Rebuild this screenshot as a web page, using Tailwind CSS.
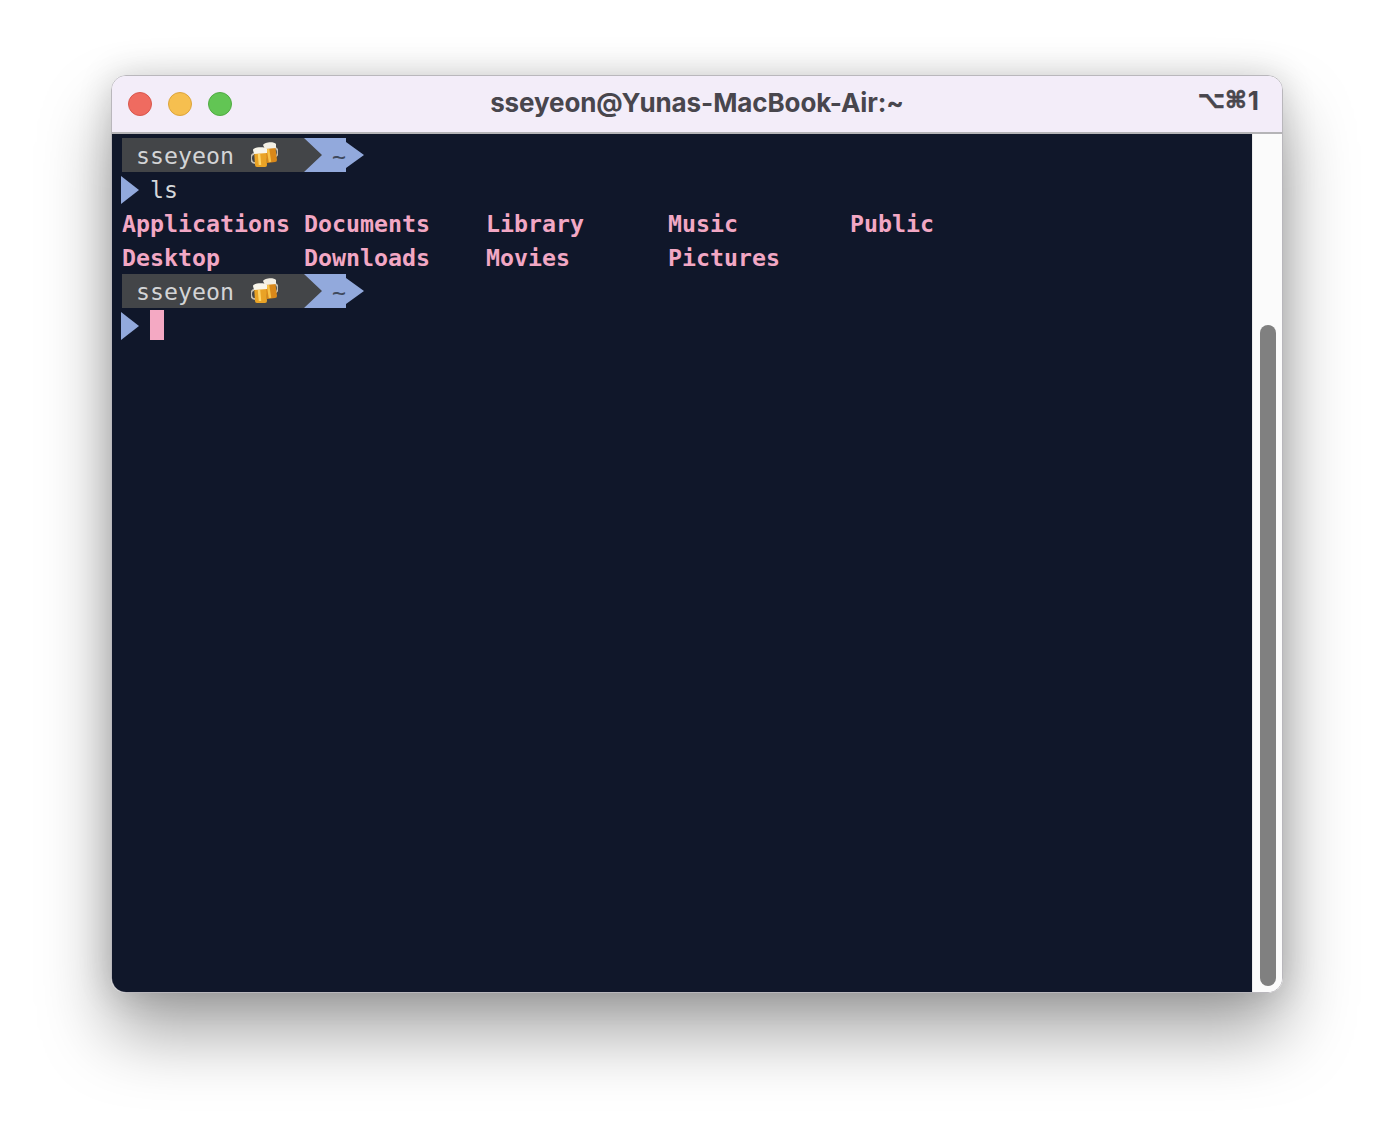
<!doctype html>
<html>
<head>
<meta charset="utf-8">
<script src="https://cdn.jsdelivr.net/npm/@tailwindcss/browser@4"></script>
</head>
<body class="bg-white w-[1394px] h-[1140px] overflow-hidden pt-[75px] pl-[111px]">
<div class="w-[1172px] h-[918px] rounded-[15px] overflow-hidden flex flex-col border border-[#b9b7bc] shadow-[0_40px_70px_rgba(0,0,0,0.36),0_0_34px_rgba(0,0,0,0.16)]">
  <div class="h-[56px] shrink-0 bg-[#f3edf9] flex items-center relative">
    <div class="flex gap-[16px] pl-[16px]">
      <span class="w-[24px] h-[24px] rounded-full bg-[#ef6b60] border border-[#d9574d]"></span>
      <span class="w-[24px] h-[24px] rounded-full bg-[#f6bf4f] border border-[#dda53c]"></span>
      <span class="w-[24px] h-[24px] rounded-full bg-[#62c554] border border-[#50ab43]"></span>
    </div>
    <div class="absolute inset-x-0 top-[9px] text-center text-[26px] leading-[36px] font-bold text-[#48464d] font-['Inter',sans-serif] tracking-[-0.1px]">sseyeon@Yunas-MacBook-Air:~</div>
    <div class="absolute right-[23px] top-[7px] flex items-baseline leading-[36px] font-bold text-[#48464d]"><span class="text-[23.5px] font-['DejaVu_Sans',sans-serif] [-webkit-text-stroke:0.7px_#48464d] -translate-y-[2px]">⌥⌘</span><span class="text-[26px] font-['Inter',sans-serif] font-bold pl-[1px]">1</span></div>
  </div>
  <div class="h-[2px] shrink-0 bg-[#b5b4b7]"></div>
  <div class="flex-1 flex min-h-0">
    <div class="flex-1 bg-[#10172a] pt-[4px] pl-[10px] font-['DejaVu_Sans_Mono','Liberation_Mono',monospace] text-[23.25px] leading-[36px]">
      <div class="h-[34px] flex relative">
        <div class="w-[200px] h-[34px] bg-[#434548] text-[#d3d4d6] pl-[14px] whitespace-pre">sseyeon</div>
        <svg class="absolute left-[129px] top-[4px]" width="27" height="25" viewBox="0 0 27 25">
          <path d="M23 6 C28 6 28 14 23 15" fill="none" stroke="#c4c0b6" stroke-width="1.8"/>
          <path d="M13 4 L24 2 L26 18 Q26 20 24 20 L16 21 Z" fill="#d9881a"/>
          <path d="M17 7 L19 20" stroke="#f8c34a" stroke-width="2.5"/>
          <path d="M12 3 C13 0 23 -1 25 2 L25 6 L14 7 Z" fill="#f3efe4"/>
          <path d="M3 12 C-1 12 -1 21 4 21" fill="none" stroke="#c4c0b6" stroke-width="1.8"/>
          <path d="M3 8 L15 7 L16 23 Q16 25 14 25 L6 25 Q4 25 4 23 Z" fill="#e9a326"/>
          <path d="M8 12 L9 23" stroke="#ffd568" stroke-width="2.5"/>
          <path d="M2 8 C2 5 14 4 16 7 L16 11 L3 12 Z" fill="#f8f5ea"/>
        </svg>
        <svg class="absolute left-[182px] top-0" width="60" height="34" viewBox="0 0 60 34"><path d="M0 0 H42 V4 L60 17 L42 30 V34 H0 L18 17 Z" fill="#92a9dc"/></svg>
        <span class="absolute left-[210px] top-[1px] text-[#3f4a5e] text-[23.25px]">~</span>
      </div>
      <div class="h-[34px] flex items-start relative text-[#d5d7da]">
        <svg class="absolute -left-[1px] top-[4px]" width="18" height="28" viewBox="0 0 18 28"><path d="M0 0 L18 14 L0 28 Z" fill="#92a9dc"/></svg>
        <span class="pl-[28px]">ls</span>
      </div>
      <div class="grid grid-cols-[182px_182px_182px_182px_182px] auto-rows-[34px] font-bold text-[#f2a7c4]">
        <span>Applications</span><span>Documents</span><span>Library</span><span>Music</span><span>Public</span>
        <span>Desktop</span><span>Downloads</span><span>Movies</span><span>Pictures</span><span></span>
      </div>
      <div class="h-[34px] flex relative">
        <div class="w-[200px] h-[34px] bg-[#434548] text-[#d3d4d6] pl-[14px] whitespace-pre">sseyeon</div>
        <svg class="absolute left-[129px] top-[4px]" width="27" height="25" viewBox="0 0 27 25">
          <path d="M23 6 C28 6 28 14 23 15" fill="none" stroke="#c4c0b6" stroke-width="1.8"/>
          <path d="M13 4 L24 2 L26 18 Q26 20 24 20 L16 21 Z" fill="#d9881a"/>
          <path d="M17 7 L19 20" stroke="#f8c34a" stroke-width="2.5"/>
          <path d="M12 3 C13 0 23 -1 25 2 L25 6 L14 7 Z" fill="#f3efe4"/>
          <path d="M3 12 C-1 12 -1 21 4 21" fill="none" stroke="#c4c0b6" stroke-width="1.8"/>
          <path d="M3 8 L15 7 L16 23 Q16 25 14 25 L6 25 Q4 25 4 23 Z" fill="#e9a326"/>
          <path d="M8 12 L9 23" stroke="#ffd568" stroke-width="2.5"/>
          <path d="M2 8 C2 5 14 4 16 7 L16 11 L3 12 Z" fill="#f8f5ea"/>
        </svg>
        <svg class="absolute left-[182px] top-0" width="60" height="34" viewBox="0 0 60 34"><path d="M0 0 H42 V4 L60 17 L42 30 V34 H0 L18 17 Z" fill="#92a9dc"/></svg>
        <span class="absolute left-[210px] top-[1px] text-[#3f4a5e] text-[23.25px]">~</span>
      </div>
      <div class="h-[34px] relative">
        <svg class="absolute -left-[1px] top-[4px]" width="18" height="28" viewBox="0 0 18 28"><path d="M0 0 L18 14 L0 28 Z" fill="#92a9dc"/></svg>
        <div class="absolute left-[28px] top-[2px] w-[14px] h-[30px] bg-[#f4a9c3]"></div>
      </div>
    </div>
    <div class="w-[30px] shrink-0 bg-[#fbfbfb] border-l border-[#ececec] flex flex-col justify-end pb-[6px] pl-[7px]">
      <div class="w-[16px] h-[661px] rounded-full bg-[#808080]"></div>
    </div>
  </div>
</div>
</body>
</html>
